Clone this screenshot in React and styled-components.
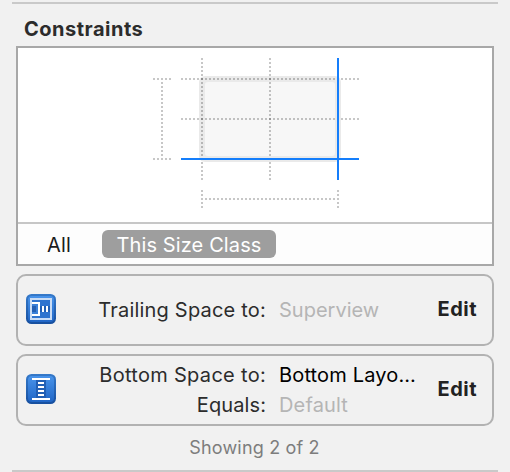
import React from "react";
import styled, { createGlobalStyle } from "styled-components";

const Global = createGlobalStyle`
  * { box-sizing: border-box; }
  body { margin: 0; background: #f1f1f1; }
`;

const Inspector = styled.main`
  width: 510px;
  height: 472px;
  padding: 2px 12px 0;
  display: flex;
  flex-direction: column;
  overflow: hidden;
  background: #f1f1f1;
  color: #2c2c2c;
  font-family: Inter, "Liberation Sans", sans-serif;
  font-size: 20px;
  line-height: 30px;
  white-space: nowrap;
`;

const Rule = styled.div`
  flex: none;
  height: 2px;
  background: #c9c9c9;
`;

const Title = styled.h2`
  margin: 0;
  padding: 10px 12px 0;
  height: 42px;
  font-size: 20px;
  line-height: 30px;
  font-weight: 700;
  letter-spacing: 0.5px;
`;

const Panel = styled.section`
  flex: none;
  margin: 0 4px;
  height: 220px;
  border: 2px solid #a8a8a8;
  background: #fff;
`;

const Diagram = styled.svg`
  display: block;
  width: 474px;
  height: 174px;
`;

const Scope = styled.div`
  display: flex;
  align-items: center;
  height: 42px;
  padding-left: 14px;
  gap: 16px;
  border-top: 2px solid #c6c6c6;
  background: #fdfdfd;
`;

const ScopeButton = styled.button`
  width: ${(p) => p.$width}px;
  height: 28px;
  padding: 0;
  border: 0;
  border-radius: 6px;
  font: inherit;
  line-height: 30px;
  letter-spacing: 0.12px;
  background: ${(p) => (p.$active ? "#9e9e9e" : "transparent")};
  color: ${(p) => (p.$active ? "#fff" : "#1c1c1c")};
`;

const Card = styled.article`
  flex: none;
  display: flex;
  align-items: center;
  margin: 8px 4px 0;
  height: 72px;
  padding: 0 15px 0 8px;
  border: 2px solid #b2b2b2;
  border-radius: 10px;
`;

const Icon = styled.svg`
  flex: none;
  width: 30px;
  height: 30px;
  margin-top: -2px;
`;

const Fields = styled.div`
  flex: 1;
  display: grid;
  grid-template-columns: 210px 1fr;
  column-gap: 13px;
`;

const Label = styled.span`
  text-align: right;
  letter-spacing: ${(p) => p.$spacing || 0}px;
`;

const Value = styled.span`
  letter-spacing: ${(p) => p.$spacing || 0}px;
  color: ${(p) => (p.$muted ? "#b5b5b5" : "#000")};
`;

const Edit = styled.button`
  padding: 0;
  border: 0;
  margin-top: -3px;
  background: none;
  font: inherit;
  font-weight: 700;
  letter-spacing: 0.5px;
  color: #222;
`;

const Status = styled.p`
  flex: none;
  margin: 0;
  height: 44px;
  padding: 7px 1px 0 0;
  font-size: 18px;
  letter-spacing: 0.17px;
  text-align: center;
  color: #7d7d7d;
`;

const dotted = [
  "M181 79H359", "M181 119H359", "M202 58V180", "M270 58V180",
  "M153 79H171", "M153 159H171", "M162 82V156",
  "M202 190V208", "M338 190V208", "M205 199H335",
];

function ConstraintDiagram() {
  return (
    <Diagram viewBox="18 48 474 174">
      <rect x="199" y="76" width="142" height="86" rx="6" fill="#eaeaea" />
      <rect x="205" y="82" width="130" height="74" rx="3" fill="#f7f7f7" />
      {dotted.map((d) => (
        <path key={d} d={d} stroke="#000" strokeOpacity=".22" strokeWidth="2" strokeDasharray="2 2" />
      ))}
      <path d="M181 159H359M338 58V180" stroke="#157efb" strokeWidth="2" />
    </Diagram>
  );
}

function IconTile({ id, children }) {
  return (
    <Icon viewBox="0 0 30 30">
      <defs>
        <linearGradient id={id} x1="0" y1="0" x2="0" y2="1">
          <stop offset="0" stopColor="#4893ea" />
          <stop offset="1" stopColor="#2066c6" />
        </linearGradient>
        <linearGradient id={id + "-edge"} x1="0" y1="0" x2="0" y2="1">
          <stop offset="0" stopColor="#3579c9" />
          <stop offset="1" stopColor="#174f9f" />
        </linearGradient>
      </defs>
      <rect width="30" height="30" rx="5.5" fill={`url(#${id}-edge)`} />
      <rect x="2" y="2" width="26" height="26" rx="4" fill={`url(#${id})`} />
      {children}
    </Icon>
  );
}

function TrailingIcon() {
  return (
    <IconTile id="trailing">
      <rect x="5" y="5" width="20" height="20" fill="#2f74cf" stroke="#c9dcf5" strokeWidth="2" />
      <path d="M14 12H24V18H14Z" fill="#215fb4" />
      <path d="M6 9H13V21H6" fill="#3a80d8" stroke="#fff" strokeWidth="2" />
      <path d="M6 12H10V18H6Z" fill="#2460b4" />
      <path d="M17 12V18M21 12V18" stroke="#fff" strokeWidth="2" />
    </IconTile>
  );
}

function BottomIcon() {
  return (
    <IconTile id="bottom">
      <rect x="10" y="6" width="10" height="18" fill="#215fb4" />
      <path d="M6 5H24M6 25H24" stroke="#fff" strokeWidth="2" />
      <path d="M12 9H18M12 13H18M12 17H18M12 21H18" stroke="#fff" strokeWidth="2" />
    </IconTile>
  );
}

export default function App() {
  return (
    <Inspector>
      <Global />
      <Rule />
      <Title>Constraints</Title>
      <Panel>
        <ConstraintDiagram />
        <Scope>
          <ScopeButton $width={54}>All</ScopeButton>
          <ScopeButton $active $width={174}>This Size Class</ScopeButton>
        </Scope>
      </Panel>
      <Card>
        <TrailingIcon />
        <Fields>
          <Label $spacing={0.2}>Trailing Space to:</Label>
          <Value $muted>Superview</Value>
        </Fields>
        <Edit>Edit</Edit>
      </Card>
      <Card>
        <BottomIcon />
        <Fields>
          <Label $spacing={0.3}>Bottom Space to:</Label>
          <Value $spacing={0.16}>Bottom Layo…</Value>
          <Label $spacing={0.1}>Equals:</Label>
          <Value $muted $spacing={0.16}>Default</Value>
        </Fields>
        <Edit>Edit</Edit>
      </Card>
      <Status>Showing 2 of 2</Status>
      <Rule />
    </Inspector>
  );
}
